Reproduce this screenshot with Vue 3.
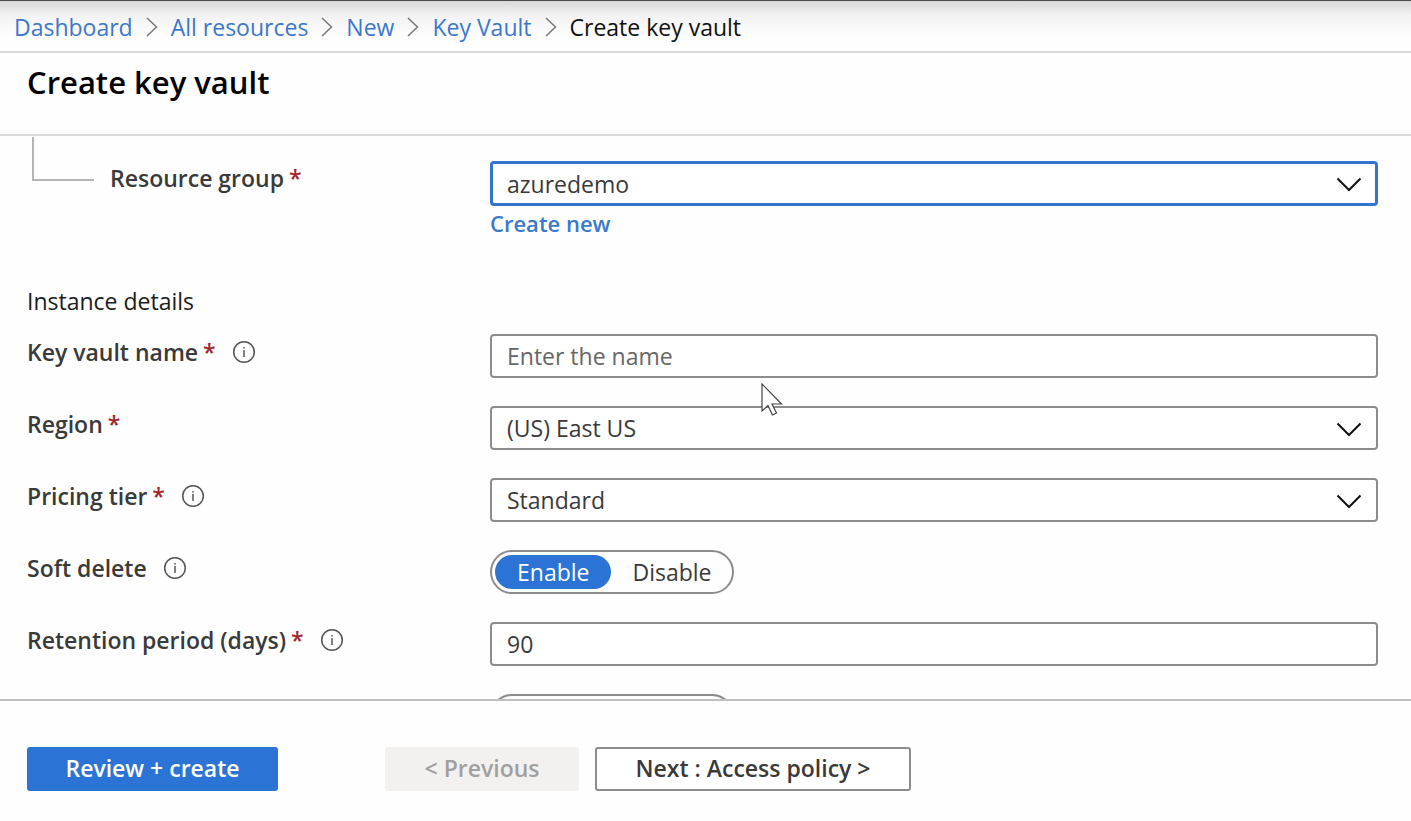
<script setup>
import { ref } from 'vue'

const crumbs = ['Dashboard', 'All resources', 'New', 'Key Vault']
const group = ref('azuredemo')
const name = ref('')
const region = ref('(US) East US')
const tier = ref('Standard')
const softDelete = ref('Enable')
const retention = ref('90')
const fields = [
  { id: 'name', label: 'Key vault name', required: true, info: true, kind: 'text', model: name, placeholder: 'Enter the name' },
  { id: 'region', label: 'Region', required: true, info: false, kind: 'select', model: region },
  { id: 'tier', label: 'Pricing tier', required: true, info: true, kind: 'select', model: tier },
  { id: 'soft', label: 'Soft delete', required: false, info: true, kind: 'toggle', model: softDelete },
  { id: 'retention', label: 'Retention period (days)', required: true, info: true, kind: 'text', model: retention },
]
</script>

<template>
  <div class="page">
    <nav class="crumbs" aria-label="Breadcrumb">
      <template v-for="c in crumbs" :key="c">
        <a href="#">{{ c }}</a>
        <svg class="sep" width="12" height="20" viewBox="0 0 12 20" aria-hidden="true"><path d="M1 1 10.5 10 1 19" /></svg>
      </template>
      <span>Create key vault</span>
    </nav>
    <header class="title"><h1>Create key vault</h1></header>

    <main class="form">
      <div class="row first">
        <div class="nested">
          <span class="branch"></span>
          <div class="label"><label for="group">Resource group</label><span class="star">*</span></div>
        </div>
        <div class="control">
          <div class="select">
            <select id="group" v-model="group" class="box focused"><option>azuredemo</option></select>
            <svg class="chevron" width="26" height="15" viewBox="0 0 26 15" aria-hidden="true"><path d="M1.5 1.5 13 13 24.5 1.5" /></svg>
          </div>
          <a class="create" href="#">Create new</a>
        </div>
      </div>

      <h2>Instance details</h2>

      <div v-for="f in fields" :key="f.id" class="row">
        <div class="label">
          <span v-if="f.kind === 'toggle'" :id="f.id + '-label'">{{ f.label }}</span>
          <label v-else :for="f.id">{{ f.label }}</label>
          <span v-if="f.required" class="star">*</span>
          <button v-if="f.info" type="button" class="info" :aria-label="'About ' + f.label">
            <svg width="24" height="24" viewBox="0 0 24 24"><circle cx="12" cy="12" r="10.3" /><path d="M12 10v7M12 7v1.6" /></svg>
          </button>
        </div>
        <input v-if="f.kind === 'text'" :id="f.id" v-model="f.model.value" class="box" type="text" :placeholder="f.placeholder" />
        <div v-else-if="f.kind === 'select'" class="select">
          <select :id="f.id" v-model="f.model.value" class="box"><option>{{ f.model.value }}</option></select>
          <svg class="chevron" width="26" height="15" viewBox="0 0 26 15" aria-hidden="true"><path d="M1.5 1.5 13 13 24.5 1.5" /></svg>
        </div>
        <div v-else class="toggle" role="radiogroup" :aria-labelledby="f.id + '-label'">
          <label v-for="o in ['Enable', 'Disable']" :key="o" :class="{ on: f.model.value === o }">
            <input v-model="f.model.value" type="radio" :name="f.id" :value="o" />{{ o }}
          </label>
        </div>
      </div>

      <div class="row">
        <span></span>
        <div class="toggle empty"></div>
      </div>
    </main>

    <footer class="actions">
      <button type="button" class="btn primary">Review + create</button>
      <button type="button" class="btn previous" disabled>&lt; Previous</button>
      <button type="button" class="btn next">Next : Access policy &gt;</button>
    </footer>

    <svg class="pointer" width="22" height="34" viewBox="0 0 22 34" aria-hidden="true"><path d="M1 1V28L7 22.5 11.5 32 15.5 30 11 21H20.5Z" /></svg>
  </div>
</template>

<style>
body { margin: 0; }
</style>

<style scoped>
.page {
  position: relative;
  box-sizing: border-box;
  height: 100vh;
  display: flex;
  flex-direction: column;
  overflow: hidden;
  border-top: 1px solid #4c4a4c;
  background: #fefefe;
  color: #3a3a3a;
  font: 400 23px/32px "Open Sans", "Noto Sans", sans-serif;
}
a { color: #3c78cc; text-decoration: none; }
button, input, select { font: inherit; color: inherit; }
.crumbs {
  flex: none;
  box-sizing: border-box;
  display: flex;
  align-items: center;
  height: 52px;
  padding: 2px 14px 0;
  border-bottom: 2px solid #dadada;
  background: linear-gradient(#d8d8d8, #f2f2f2 14px, #fefefe 36px);
  color: #111;
  white-space: nowrap;
}
.sep { margin: 0 13px; fill: none; stroke: #777; stroke-width: 1.5; }
.title {
  flex: none;
  height: 81px;
  border-bottom: 2px solid #dadada;
}
h1 { margin: 0; padding: 9px 27px; font-size: 31px; line-height: 40px; font-weight: 600; color: #000; }
.form { flex: 1; min-height: 0; overflow: hidden; padding: 0 33px 0 27px; }
.row {
  display: grid;
  grid-template-columns: 463px 1fr;
  align-items: start;
  margin-bottom: 28px;
}
.label { display: flex; align-items: center; height: 36px; font-weight: 600; white-space: nowrap; }
.star { margin-left: 5px; color: #a4262c; }
.info { display: flex; margin-left: 16px; padding: 0; border: 0; background: none; }
.info svg { fill: none; stroke: #555; stroke-width: 1.5; }
.nested { display: flex; }
.nested .label { margin: 24px 0 0 16px; }
.branch { width: 60px; height: 42px; margin: 1px 0 0 5px; border: solid #b4b4b4; border-width: 0 0 2px 2px; }
.first .control { padding-top: 25px; }
.box {
  box-sizing: border-box;
  display: block;
  width: 100%;
  height: 44px;
  margin: 0;
  padding: 0 15px;
  border: 2px solid #8c8c8c;
  border-radius: 4px;
  background: #fff;
  outline: none;
  appearance: none;
}
.box::placeholder { color: #666; opacity: 1; }
.focused { height: 45px; border: 3px solid #3274cf; padding: 0 14px; }
.select { position: relative; }
.chevron { position: absolute; right: 16px; top: 16px; pointer-events: none; fill: none; stroke: #111; stroke-width: 2; }
.create { display: block; margin-top: 1px; font-size: 22px; font-weight: 600; }
h2 { margin: 0 0 17px; padding-top: 18px; font-size: 23px; line-height: 32px; font-weight: 400; color: #1c1c1c; }
.toggle {
  box-sizing: border-box;
  display: flex;
  justify-self: start;
  height: 44px;
  padding: 3px;
  border: 2px solid #8c8c8c;
  border-radius: 22px;
}
.toggle label { position: relative; padding: 0 17px 0 21px; border-radius: 17px; line-height: 34px; }
.toggle input { position: absolute; inset: 0; width: 100%; height: 100%; margin: 0; opacity: 0; }
.toggle .on { padding: 0 22px; background: #2b74d5; color: #fff; }
.empty { width: 244px; }
.actions {
  flex: none;
  display: flex;
  align-items: flex-start;
  height: 74px;
  padding: 46px 27px 0;
  border-top: 2px solid #c0c0c0;
}
.btn {
  box-sizing: border-box;
  height: 44px;
  padding: 0 0 2px;
  border: 0;
  border-radius: 3px;
  font-weight: 600;
  white-space: nowrap;
}
.primary { width: 251px; background: #2b74d5; color: #fff; }
.previous { width: 194px; margin-left: 107px; background: #f2f1f0; color: #a0a0a0; }
.next { width: 316px; margin-left: 16px; border: 2px solid #8c8c8c; background: #fff; }
.pointer { position: absolute; left: 761px; top: 382px; fill: #fff; stroke: #444; stroke-width: 1.2; pointer-events: none; }
</style>
